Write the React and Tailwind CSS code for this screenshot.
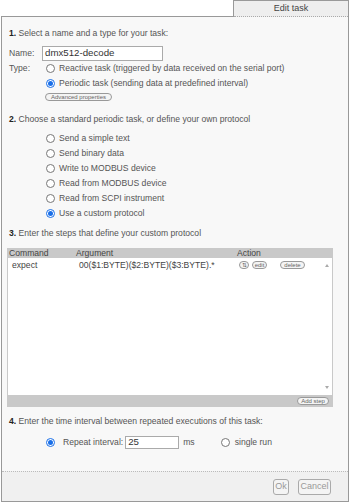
import React from 'react';

const Radio = ({ checked }) =>
  checked ? (
    <span className="w-[9px] h-[9px] rounded-full border border-[#1a6fe8] bg-white flex items-center justify-center shrink-0">
      <span className="w-[5px] h-[5px] rounded-full bg-[#1a6fe8]" />
    </span>
  ) : (
    <span className="block w-[9px] h-[9px] rounded-full border border-[#777] bg-white shrink-0" />
  );

const Pill = ({ children, className = '' }) => (
  <span
    className={
      'inline-flex items-center justify-center h-[8px] rounded-full border border-[#999] bg-[#f4f4f4] text-[6px] leading-none text-[#666] ' +
      className
    }
  >
    {children}
  </span>
);

const Heading = ({ n, children, className = '' }) => (
  <div className={'leading-[12px] text-[#555] ' + className}>
    <span className="font-bold text-[#222]">{n}.</span> {children}
  </div>
);

const protocols = [
  'Send a simple text',
  'Send binary data',
  'Write to MODBUS device',
  'Read from MODBUS device',
  'Read from SCPI instrument',
  'Use a custom protocol',
];

export default function App() {
  return (
    <div className="w-[350px] h-[503px] bg-white pl-[1px] font-['Liberation_Sans',Arial,sans-serif] text-[8.6px]">
      <div className="w-[348px]">
        {/* tab strip */}
        <div className="flex h-[17px]">
          <div className="flex-1 border-b border-[#999]" />
          <div className="w-[116px] bg-[#eeeeee] border-t border-x border-[#999] flex flex-col">
            <div className="flex-1 flex items-center justify-center text-[9px] text-[#444]">Edit task</div>
            <div className="border-t border-dotted border-[#aaa]" />
          </div>
        </div>

        <div className="h-[485px] border-x border-b border-[#999] bg-[#f8f8f8] flex flex-col">
          <div className="flex-1 px-[7px] pt-[10px]">
            <Heading n="1">Select a name and a type for your task:</Heading>

            <div className="flex items-center h-[15px] mt-[7px]">
              <span className="w-[33px] text-[#555]">Name:</span>
              <div className="w-[121px] h-[15px] border border-[#aaa] bg-white flex items-center px-[2px] text-[9.7px] text-[#333]">
                dmx512-decode
              </div>
            </div>

            <div className="flex">
              <span className="w-[33px] h-[15px] leading-[15px] text-[#555]">Type:</span>
              <div className="flex flex-col ml-[4px]">
                <div className="flex items-center h-[15px] gap-[4px] text-[#555]">
                  <Radio />
                  <span>Reactive task (triggered by data received on the serial port)</span>
                </div>
                <div className="flex items-center h-[15px] gap-[4px] text-[#555]">
                  <Radio checked />
                  <span>Periodic task (sending data at predefined interval)</span>
                </div>
                <div className="flex mt-[2px] -ml-[1px]">
                  <Pill className="w-[67px]">Advanced properties</Pill>
                </div>
              </div>
            </div>

            <Heading n="2" className="mt-[12px]">
              Choose a standard periodic task, or define your own protocol
            </Heading>
            <div className="mt-[6px] pl-[37px]">
              {protocols.map((p, i) => (
                <div key={p} className="flex items-center h-[15px] gap-[4px] text-[#555]">
                  <Radio checked={i === protocols.length - 1} />
                  <span>{p}</span>
                </div>
              ))}
            </div>

            <Heading n="3" className="mt-[6px]">Enter the steps that define your custom protocol</Heading>

            <div className="mt-[9px] -ml-[2px] w-[326px]">
              <div className="h-[10px] bg-[#c9c9c9] flex items-center text-[#444] leading-none">
                <span className="w-[69px] pl-[2px]">Command</span>
                <span className="w-[161px]">Argument</span>
                <span>Action</span>
              </div>
              <div className="h-[137px] bg-white border-x border-[#c9c9c9] flex">
                <div className="flex-1">
                  <div className="flex items-center h-[14px] text-[#444]">
                    <span className="w-[68px] pl-[4px]">expect</span>
                    <span className="w-[158px] pl-[3px]">00($1:BYTE)($2:BYTE)($3:BYTE).*</span>
                    <span className="flex items-center gap-[3px] pl-[5px]">
                      <Pill className="w-[10px] text-[5px]">⇅</Pill>
                      <Pill className="w-[15px]">edit</Pill>
                      <Pill className="w-[25px] ml-[10px]">delete</Pill>
                    </span>
                  </div>
                </div>
                <div className="w-[11px] flex flex-col items-center justify-between py-[6px]">
                  <span className="w-0 h-0 border-x-[2.5px] border-x-transparent border-b-[3px] border-b-[#aaa]" />
                  <span className="w-0 h-0 border-x-[2.5px] border-x-transparent border-t-[3px] border-t-[#aaa]" />
                </div>
              </div>
              <div className="h-[12px] bg-[#c9c9c9] flex items-center justify-end pr-[4px]">
                <Pill className="w-[32px] bg-[#f0f0f0]">Add step</Pill>
              </div>
            </div>

            <Heading n="4" className="mt-[8px]">
              Enter the time interval between repeated executions of this task:
            </Heading>

            <div className="mt-[9px] h-[13px] pl-[37px] flex items-center text-[#555]">
              <Radio checked />
              <span className="ml-[8px]">Repeat interval:</span>
              <div className="ml-[2px] w-[54px] h-[13px] border border-[#aaa] bg-white flex items-center px-[2px] text-[9.7px] text-[#333]">
                25
              </div>
              <span className="ml-[4px]">ms</span>
              <span className="ml-[26px] flex">
                <Radio />
              </span>
              <span className="ml-[5px]">single run</span>
            </div>
          </div>

          <div className="h-[30px] border-t border-dotted border-[#bbb] bg-[#f0f0f0] flex items-center justify-end pr-[17px] gap-[9px]">
            <button className="h-[16px] w-[16px] rounded-[3px] border border-[#aaa] bg-[#f4f4f4] text-[9px] text-[#999] flex items-center justify-center">
              Ok
            </button>
            <button className="h-[16px] w-[33px] rounded-[3px] border border-[#aaa] bg-[#f4f4f4] text-[9px] text-[#999] flex items-center justify-center">
              Cancel
            </button>
          </div>
        </div>
      </div>
    </div>
  );
}
